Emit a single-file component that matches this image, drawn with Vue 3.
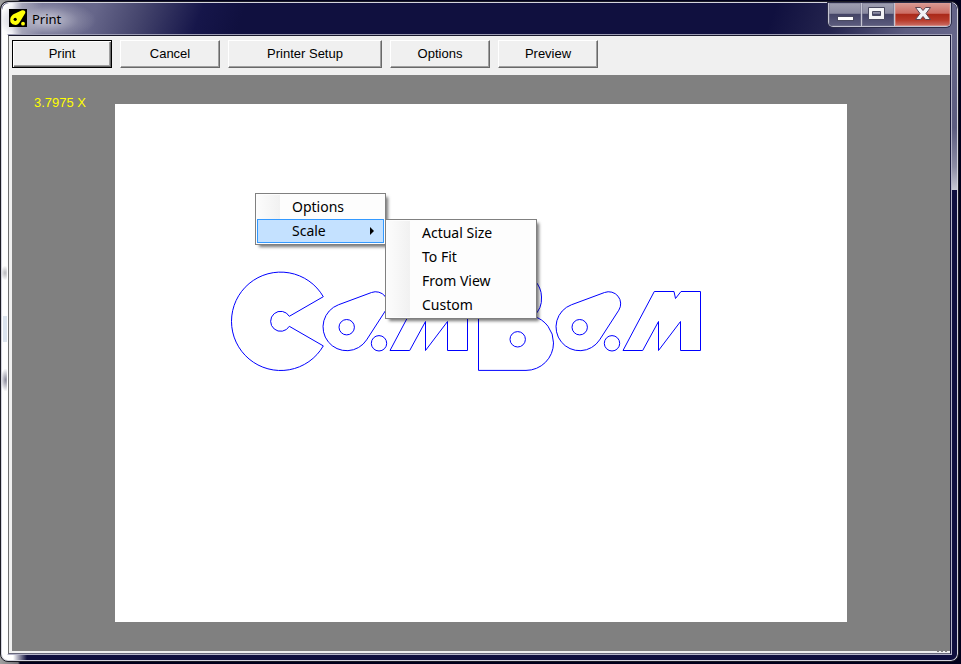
<script setup>
import { ref } from 'vue'

const actions = [
  { label: 'Print', primary: true },
  { label: 'Cancel' },
  { label: 'Printer Setup', wide: true },
  { label: 'Options' },
  { label: 'Preview' },
]
const scales = ['Actual Size', 'To Fit', 'From View', 'Custom']
const zoom = ref('3.7975 X')
</script>

<template>
  <div class="desktop">
    <main class="window">
      <header class="titlebar">
        <svg class="app-icon" viewBox="0 0 18 18" aria-hidden="true">
          <rect width="18" height="18" fill="#000" />
          <path d="M6 4.600L13 1.300Q16.700 .800 16.300 4L11.300 12.300Q9 16.500 5.500 15.800Q1 15 1.200 10.500Q1.500 6.500 6 4.600Z" fill="#ffff0a" />
          <circle cx="6.200" cy="10.300" r="1.600" fill="#000" />
          <circle cx="14" cy="14.700" r="1.900" fill="#ffff0a" />
        </svg>
        <h1 class="title">Print</h1>
        <div class="controls">
          <button class="control" type="button" aria-label="Minimize">
            <svg viewBox="0 0 32 23"><rect x="8.500" y="13.500" width="16" height="4" fill="#fff" stroke="#4a4a60" /></svg>
          </button>
          <button class="control" type="button" aria-label="Maximize">
            <svg viewBox="0 0 32 23">
              <path d="M6.500 4.500H22.500V16.500H6.500ZM10.500 8.500V12.500H18.500V8.500Z" fill="#f4f4f6" stroke="#4a4a60" fill-rule="evenodd" />
            </svg>
          </button>
          <button class="control close" type="button" aria-label="Close">
            <svg viewBox="0 0 55 23">
              <path d="M20.500 4.500H25.500L28 7.500L30.500 4.500H35.500L31 10.500L35.500 16.500H30.500L28 13.500L25.500 16.500H20.500L25 10.500Z" fill="#f2f2f6" stroke="#5c4450" />
            </svg>
          </button>
        </div>
      </header>

      <div class="client">
        <div class="content">
          <nav class="toolbar">
            <button
              v-for="a in actions"
              :key="a.label"
              type="button"
              class="tool"
              :class="{ primary: a.primary, wide: a.wide }"
            >{{ a.label }}</button>
          </nav>

          <section class="viewport">
            <output class="zoom">{{ zoom }}</output>
            <div class="page">
              <svg class="drawing" viewBox="115 104 732 518" preserveAspectRatio="xMinYMin meet" aria-hidden="true">
                <defs>
                  <g id="am">
                    <path d="M571.400 304.800L604.500 292.500A12 12 0 0 1 618.800 310.200L599.600 339.900A23.700 23.700 0 1 1 571.400 304.800Z" />
                    <circle cx="579.700" cy="327.200" r="7.700" />
                    <circle cx="612" cy="343.300" r="7.700" />
                    <path d="M623 350.500L654.300 291.500H674L675.500 298.500L681 291.500H700.500V350.500H680.500V321.500L658.500 350.500V321.500L642.700 350.500Z" />
                  </g>
                </defs>
                <path d="M323.300 296.700A49.200 49.200 0 1 0 323.300 345.900L289.300 326.300A10 10 0 1 1 289.300 316.300Z" />
                <use href="#am" x="-233" />
                <path d="M478.500 273.500H518A23.600 23.600 0 0 1 541.500 297A23.600 23.600 0 0 1 533.500 316.300A27.500 27.500 0 0 1 553.500 342.900A27.500 27.500 0 0 1 526 370.400H478.500Z" />
                <circle cx="517.700" cy="339.300" r="7.700" />
                <use href="#am" />
              </svg>

              <div class="menu context" role="menu">
                <button class="item" type="button" role="menuitem">Options</button>
                <div class="branch">
                  <button class="item active" type="button" role="menuitem" aria-haspopup="true" aria-expanded="true">
                    Scale
                    <svg class="arrow" viewBox="0 0 4 8" aria-hidden="true"><path d="M0 0L4 4L0 8Z" /></svg>
                  </button>
                  <div class="menu submenu" role="menu">
                    <button v-for="s in scales" :key="s" class="item" type="button" role="menuitem">{{ s }}</button>
                  </div>
                </div>
              </div>
            </div>
          </section>
          <div class="grip"><i></i><i></i><i></i></div>
        </div>
      </div>
    </main>
  </div>
</template>

<style>
body {
  background: #00001c;
}
</style>

<style scoped>
* {
  box-sizing: border-box;
}
.desktop {
  display: flex;
  min-height: 100vh;
  padding: 1px 2px 2px 0;
  background: linear-gradient(90deg, #a0a0a0 0, #707078 18px, #00001c 20px);
}
.window {
  flex: 1;
  display: flex;
  flex-direction: column;
  padding: 0 6px 6px;
  border: 1px solid #1c1c24;
  border-radius: 8px;
  box-shadow: inset 0 0 0 1px #d4d4de;
  background:
    radial-gradient(ellipse at center, #b9b9bd 0, transparent 75%) 0 264px / 8px 14px no-repeat,
    linear-gradient(#dce4ee, #dce4ee) 2px 314px / 5px 26px no-repeat,
    radial-gradient(ellipse at center, #8c8c9c 0, transparent 75%) 0 367px / 9px 22px no-repeat,
    linear-gradient(#fff, #fff) 0 32px / 7px calc(100% - 40px) no-repeat,
    linear-gradient(#66668a, #5c5c80 60%, #8c8ca4 85%, #c8c8d4) 100% 32px / 8px 156px no-repeat,
    linear-gradient(90deg, #fff 12px, #10103f 26px) 0 100% / 100% 8px no-repeat,
    linear-gradient(#10103f, #10103f);
}
.titlebar {
  display: flex;
  align-items: flex-start;
  height: 32px;
  flex: none;
  margin: 1px -5px -1px;
  padding: 0 6px 0 7px;
  border-radius: 7px 7px 0 0;
  background:
    radial-gradient(ellipse 50px 20px at 44px 17px, #b4b4c6 20%, #a4a4b866 65%, transparent),
    linear-gradient(90deg, #fff 0, #f4f4f8 10px, #a4a4b8 20px, transparent 40px),
    linear-gradient(110deg, #77779a 0, #66668a 90px, #44446c 135px, #16164a 190px, #10103f 230px, #10103f calc(100% - 180px), #24244e calc(100% - 120px), #5c5c80 calc(100% - 50px), #66668a);
}
.app-icon {
  width: 18px;
  height: 18px;
  margin-top: 6px;
}
.title {
  margin: 7px 0 0 5px;
  font: 400 13px/18px "Noto Sans", sans-serif;
  color: #000;
}
.controls {
  display: flex;
  margin-left: auto;
  height: 24px;
  border: 1px solid #c4c4d2;
  border-top: 0;
  border-radius: 0 0 5px 5px;
  overflow: hidden;
  box-shadow: 0 0 0 1px #2c2c48;
}
.control {
  width: 33px;
  padding: 0;
  border: 0;
  border-right: 1px solid #c4c4d2;
  background: linear-gradient(#a0a0b2 0, #8a8aa0 45%, #444466 48%, #5c5c7e 100%);
  box-shadow: inset 0 0 0 1px #77779080;
}
.control svg {
  display: block;
  width: 100%;
  height: 23px;
}
.control.close {
  width: 55px;
  border-right: 0;
  background: linear-gradient(#d89a94 0, #cc6c62 45%, #a92818 48%, #b83a2a 75%, #cc7068 100%);
  box-shadow: inset 0 0 0 1px #e0a09880;
}
.client {
  flex: 1;
  display: flex;
  border: 1px solid;
  border-color: #9c9cb4 #b4b4c8 #b4b4c8 #fff;
}
.content {
  position: relative;
  flex: 1;
  display: flex;
  flex-direction: column;
  padding-bottom: 2px;
  border: 1px solid;
  border-color: #18182c #18183a #66667a #707070;
  background: #f0f0f0;
}
.toolbar {
  display: flex;
  gap: 8px;
  padding: 4px 3px 7px;
}
.tool {
  width: 100px;
  height: 28px;
  padding: 0 0 1px;
  border: 1px solid;
  border-color: #fff #696969 #696969 #fff;
  box-shadow: inset -1px -1px #a0a0a0;
  background: #f0f0f0;
  font: 13px/16px "Liberation Sans", Arial, sans-serif;
  color: #000;
}
.tool.wide {
  width: 154px;
}
.tool.primary {
  border-color: #000;
  box-shadow: inset 1px 1px #fff, inset -1px -1px #696969, inset -2px -2px #a0a0a0;
}
.viewport {
  flex: 1;
  display: grid;
  grid-template-columns: 103px 1fr 103px;
  margin-left: 3px;
  background: #808080;
}
.zoom {
  padding: 20px 0 0 22px;
  font: 13px/16px "Liberation Sans", Arial, sans-serif;
  color: #ff0;
}
.page {
  position: relative;
  margin: 29px 0;
  background: #fff;
}
.drawing {
  display: block;
  width: 100%;
  fill: none;
  stroke: #00f;
  stroke-width: 1;
}
.menu {
  position: absolute;
  padding: 1px;
  border: 1px solid #808080;
  background: linear-gradient(90deg, #fcfcfc, #f1f1f1) 1px 1px / 23px calc(100% - 2px) no-repeat #fdfdfd;
  box-shadow: 3px 3px 3px -1px #00000088;
}
.context {
  left: 140px;
  top: 89px;
  width: 131px;
}
.branch {
  position: relative;
}
.submenu {
  left: 128px;
  top: 0;
  width: 152px;
}
.item {
  display: flex;
  align-items: center;
  justify-content: space-between;
  width: 100%;
  height: 24px;
  padding: 0 9px 0 34px;
  border: 1px solid transparent;
  background: none;
  font: 14px/20px "Noto Sans", sans-serif;
  color: #000;
  text-align: left;
}
.item.active {
  border-color: #3399ff;
  background: #c4e1ff;
}
.arrow {
  width: 4px;
  height: 8px;
}
.grip {
  position: absolute;
  right: 3px;
  bottom: 1px;
  display: flex;
  gap: 2px;
}
.grip i {
  width: 2px;
  height: 1px;
  background: #808080;
}
</style>
